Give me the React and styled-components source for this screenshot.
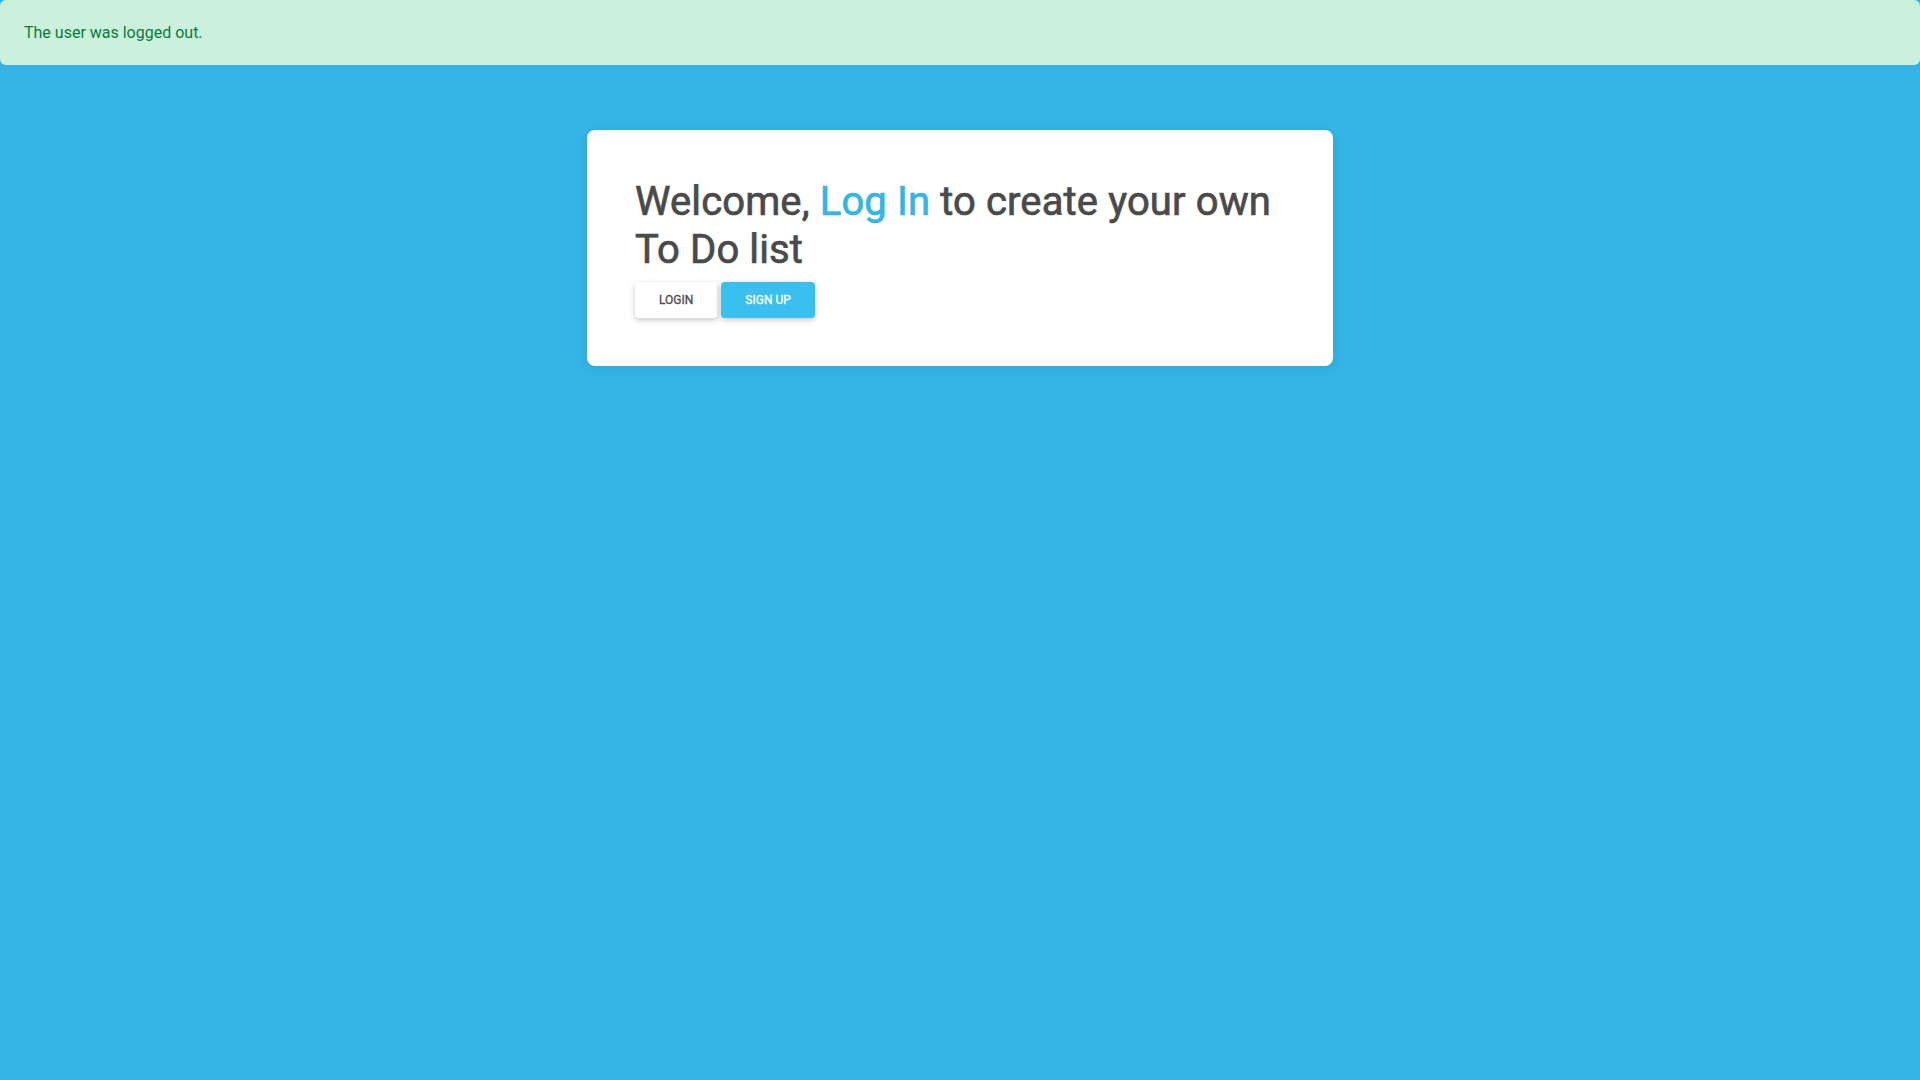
import styled, { createGlobalStyle } from 'styled-components'

const GlobalStyle = createGlobalStyle`
  html, body {
    margin: 0;
    padding: 0;
    min-height: 100%;
    background: #33b4e5;
    font-family: Roboto, 'Liberation Sans', sans-serif;
  }
`

const Page = styled.div`
  min-height: 100vh;
  display: flex;
  flex-direction: column;
  align-items: center;
`

const Alert = styled.div`
  box-sizing: border-box;
  width: 100%;
  padding: 21px 24px 20px;
  background: #c9f1dc;
  color: #0c7a3b;
  font-size: 16px;
  line-height: 24px;
  border-radius: 6px;
`

const Card = styled.div`
  box-sizing: border-box;
  width: 746px;
  margin-top: 65px;
  padding: 48px 48px 48px;
  background: #fff;
  border-radius: 8px;
  box-shadow: 0 2px 10px rgba(0, 0, 0, 0.08);
`

// Roboto Medium is not installed, so thicken the regular cut a little
const Title = styled.h1`
  margin: 0 0 8px;
  font-size: 40px;
  line-height: 48px;
  font-weight: 400;
  letter-spacing: 0.12px;
  -webkit-text-stroke: 0.7px currentColor;
  color: #4a4a4a;
`

const Accent = styled.span`
  color: #33b5e5;
`

const Buttons = styled.div`
  display: flex;
  gap: 4px;
`

const Button = styled.button`
  height: 36px;
  padding: 0 24px;
  border: none;
  border-radius: 4px;
  font-family: Roboto, 'Liberation Sans', sans-serif;
  font-size: 12px;
  font-weight: 400;
  -webkit-text-stroke: 0.3px currentColor;
  text-transform: uppercase;
  cursor: pointer;
  background: ${({ primary }) => (primary ? '#3ac0ee' : '#fff')};
  color: ${({ primary }) => (primary ? '#fff' : '#4a4a4a')};
  box-shadow: 0 2px 5px rgba(0, 0, 0, 0.16), 0 2px 10px rgba(0, 0, 0, 0.08);
`

const App = () => (
  <>
    <GlobalStyle />
    <Page>
      <Alert>The user was logged out.</Alert>
      <Card>
        <Title>
          Welcome, <Accent>Log In</Accent> to create your own To Do list
        </Title>
        <Buttons>
          <Button>Login</Button>
          <Button primary>Sign up</Button>
        </Buttons>
      </Card>
    </Page>
  </>
)

export default App
